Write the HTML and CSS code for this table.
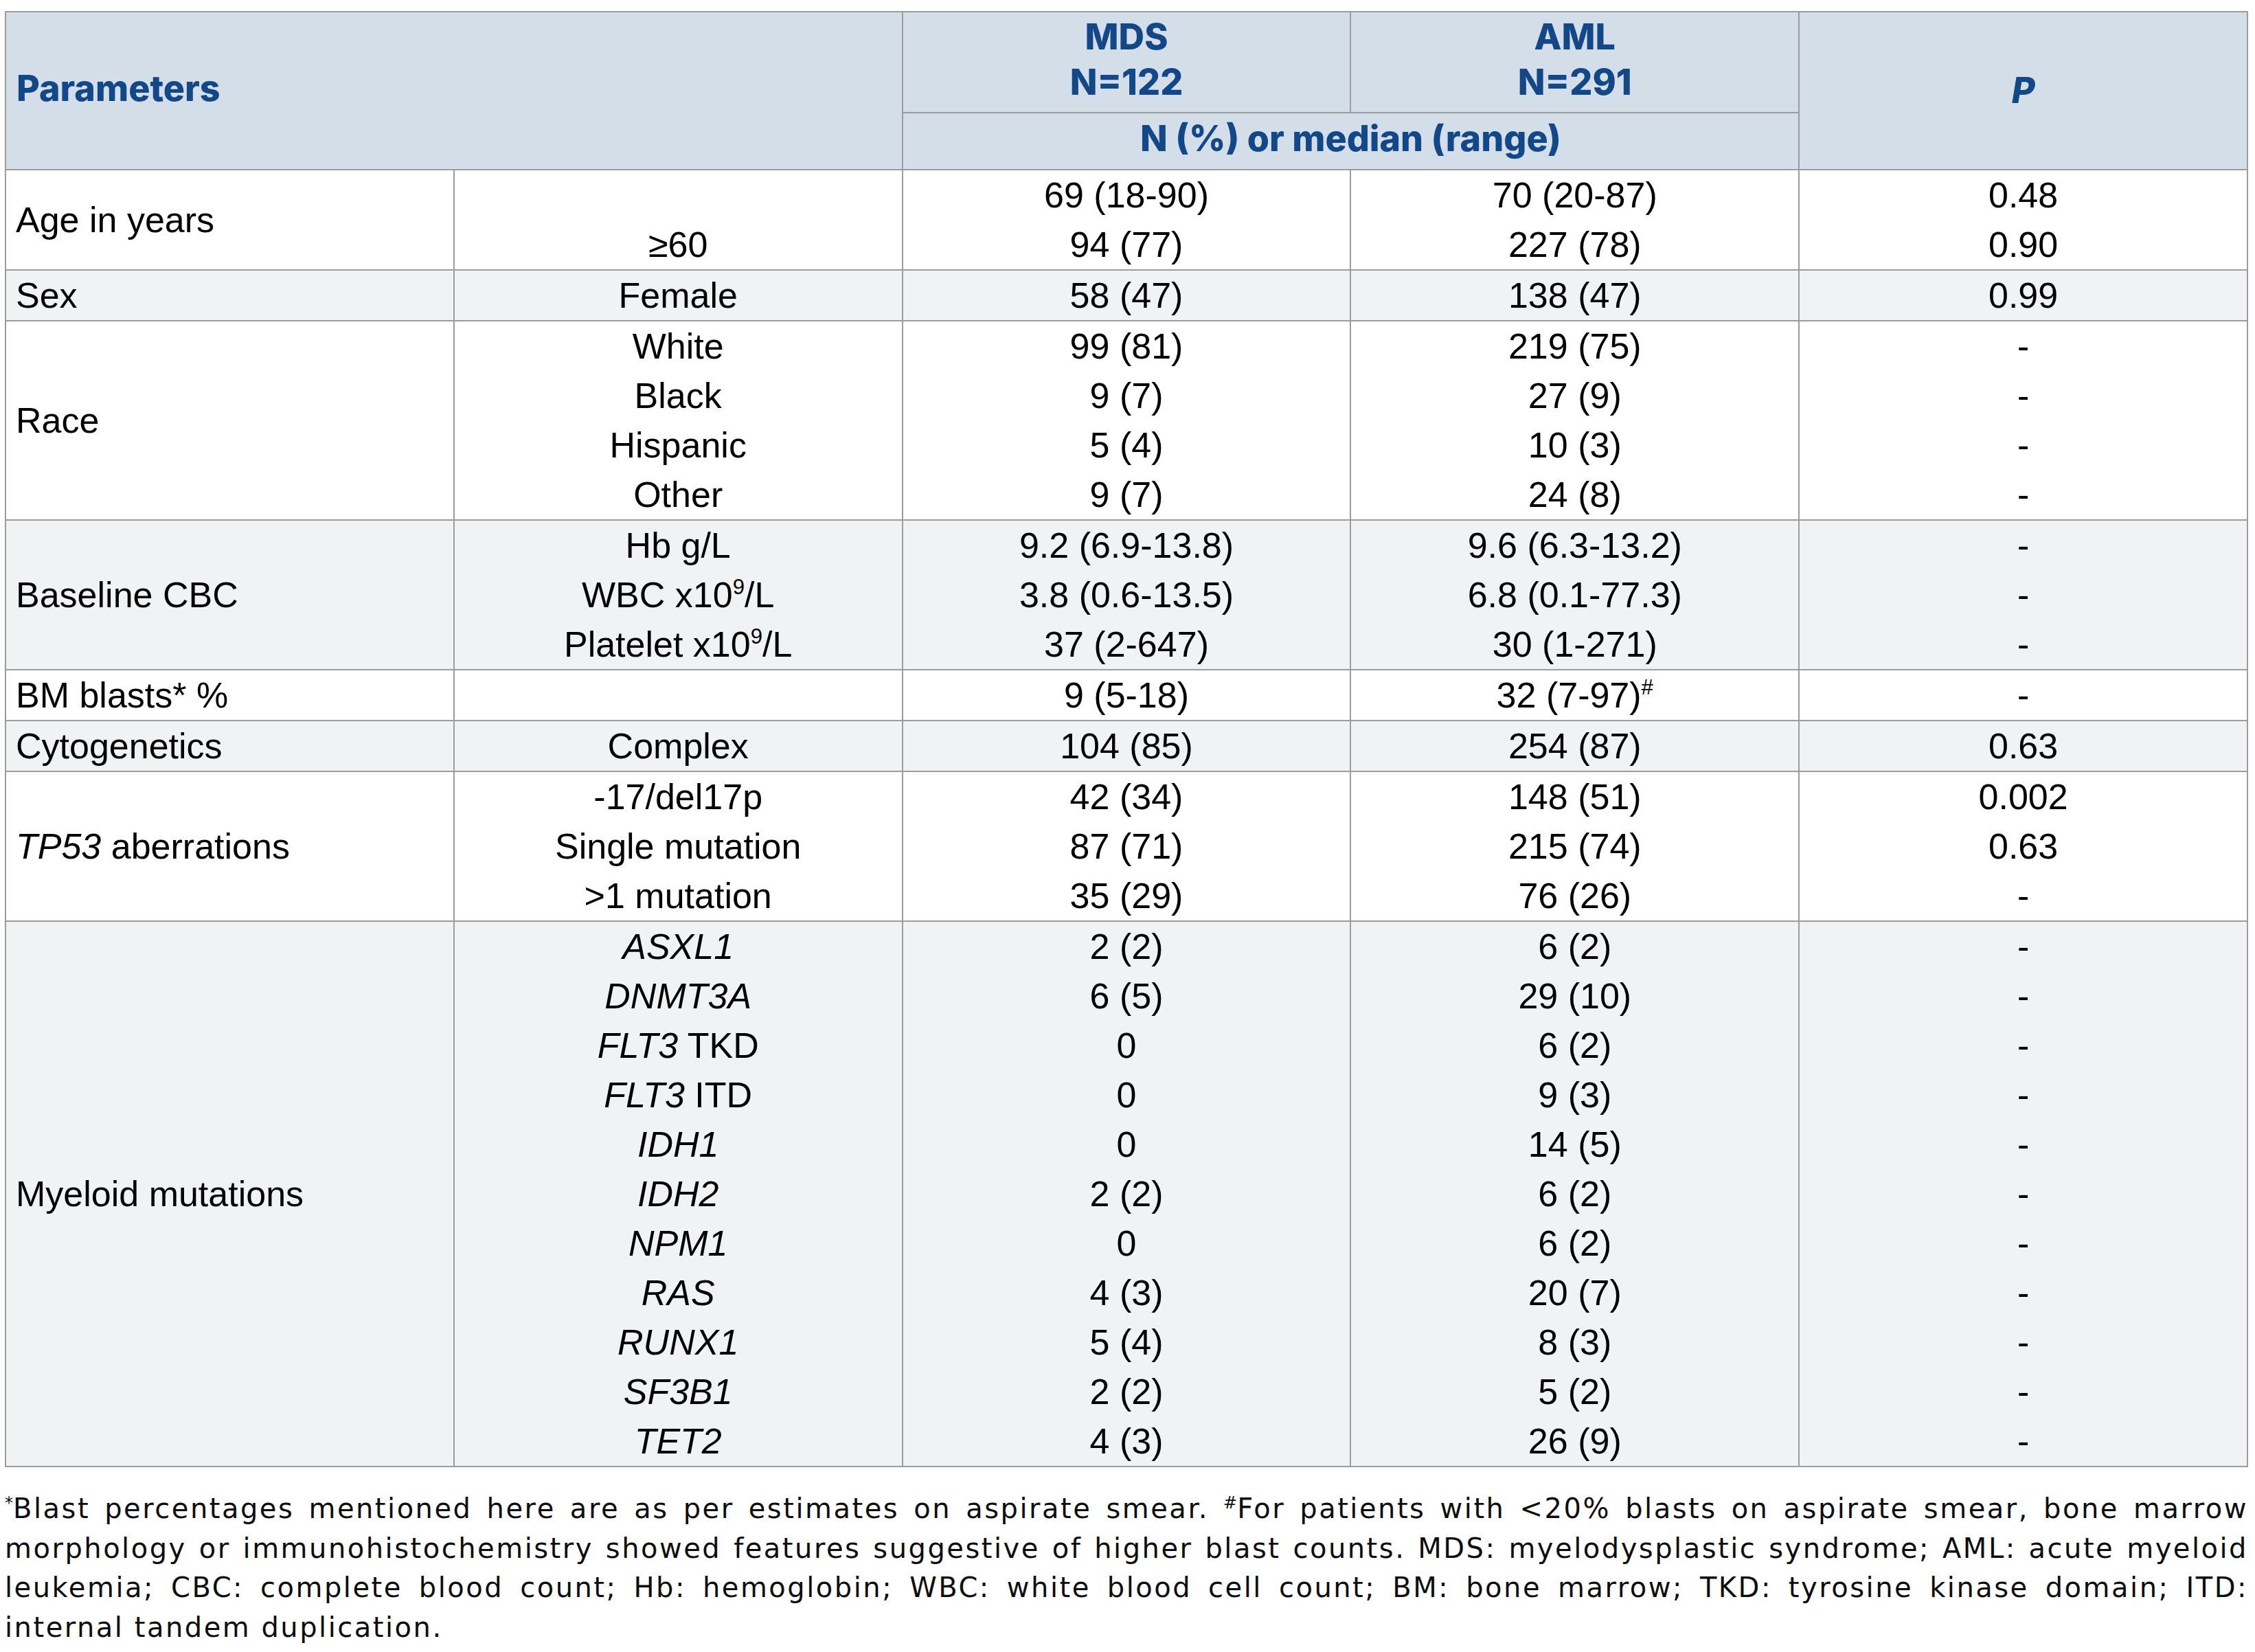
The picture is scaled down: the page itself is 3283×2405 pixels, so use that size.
FILE: index.html
```html
<!DOCTYPE html>
<html lang="en">
<head>
<meta charset="utf-8">
<title>MDS vs AML baseline characteristics</title>
<link rel="stylesheet" href="styles.css">
</head>
<body>
<div class="page">
<table class="tbl">
  <colgroup>
    <col class="c"><col class="c"><col class="c"><col class="c"><col class="c">
  </colgroup>
  <thead>
    <tr class="h1">
      <th class="hl" colspan="2" rowspan="2">Parameters</th>
      <th>MDS<br>N=122</th>
      <th>AML<br>N=291</th>
      <th class="hp" rowspan="2"><i>P</i></th>
    </tr>
    <tr class="h2">
      <th colspan="2">N (%) or median (range)</th>
    </tr>
  </thead>
  <tbody>
    <tr class="w">
      <td class="lab">Age in years</td>
      <td>&nbsp;<br>≥60</td>
      <td>69 (18-90)<br>94 (77)</td>
      <td>70 (20-87)<br>227 (78)</td>
      <td>0.48<br>0.90</td>
    </tr>
    <tr class="g">
      <td class="lab">Sex</td>
      <td>Female</td>
      <td>58 (47)</td>
      <td>138 (47)</td>
      <td>0.99</td>
    </tr>
    <tr class="w">
      <td class="lab">Race</td>
      <td>White<br>Black<br>Hispanic<br>Other</td>
      <td>99 (81)<br>9 (7)<br>5 (4)<br>9 (7)</td>
      <td>219 (75)<br>27 (9)<br>10 (3)<br>24 (8)</td>
      <td>-<br>-<br>-<br>-</td>
    </tr>
    <tr class="g">
      <td class="lab">Baseline CBC</td>
      <td>Hb g/L<br>WBC x10<sup>9</sup>/L<br>Platelet x10<sup>9</sup>/L</td>
      <td>9.2 (6.9-13.8)<br>3.8 (0.6-13.5)<br>37 (2-647)</td>
      <td>9.6 (6.3-13.2)<br>6.8 (0.1-77.3)<br>30 (1-271)</td>
      <td>-<br>-<br>-</td>
    </tr>
    <tr class="w">
      <td class="lab">BM blasts* %</td>
      <td></td>
      <td>9 (5-18)</td>
      <td>32 (7-97)<sup>#</sup></td>
      <td>-</td>
    </tr>
    <tr class="g">
      <td class="lab">Cytogenetics</td>
      <td>Complex</td>
      <td>104 (85)</td>
      <td>254 (87)</td>
      <td>0.63</td>
    </tr>
    <tr class="w">
      <td class="lab"><i>TP53</i> aberrations</td>
      <td>-17/del17p<br>Single mutation<br>&gt;1 mutation</td>
      <td>42 (34)<br>87 (71)<br>35 (29)</td>
      <td>148 (51)<br>215 (74)<br>76 (26)</td>
      <td>0.002<br>0.63<br>-</td>
    </tr>
    <tr class="g">
      <td class="lab">Myeloid mutations</td>
      <td><i>ASXL1</i><br><i>DNMT3A</i><br><i>FLT3</i> TKD<br><i>FLT3</i> ITD<br><i>IDH1</i><br><i>IDH2</i><br><i>NPM1</i><br><i>RAS</i><br><i>RUNX1</i><br><i>SF3B1</i><br><i>TET2</i></td>
      <td>2 (2)<br>6 (5)<br>0<br>0<br>0<br>2 (2)<br>0<br>4 (3)<br>5 (4)<br>2 (2)<br>4 (3)</td>
      <td>6 (2)<br>29 (10)<br>6 (2)<br>9 (3)<br>14 (5)<br>6 (2)<br>6 (2)<br>20 (7)<br>8 (3)<br>5 (2)<br>26 (9)</td>
      <td>-<br>-<br>-<br>-<br>-<br>-<br>-<br>-<br>-<br>-<br>-</td>
    </tr>
  </tbody>
</table>
<div class="notes">
  <span class="ln"><sup>*</sup>Blast percentages mentioned here are as per estimates on aspirate smear. <sup>#</sup>For patients with &lt;20% blasts on aspirate smear, bone marrow</span>
  <span class="ln">morphology or immunohistochemistry showed features suggestive of higher blast counts. MDS: myelodysplastic syndrome; AML: acute myeloid</span>
  <span class="ln">leukemia; CBC: complete blood count; Hb: hemoglobin; WBC: white blood cell count; BM: bone marrow; TKD: tyrosine kinase domain; ITD:</span>
  <span class="ln last">internal tandem duplication.</span>
</div>
</div>
</body>
</html>
```

FILE: styles.css
```css
html, body {
  margin: 0;
  padding: 0;
  background: #ffffff;
}

.page {
  padding: 16px 0 0 7px;
  width: 3266px;
}

.tbl {
  border-collapse: collapse;
  table-layout: fixed;
  width: 3266px;
  font-family: "Liberation Sans", Arial, sans-serif;
  font-size: 52px;
  color: #000000;
}

.tbl .c {
  width: 20%;
}

.tbl th {
  background: #d4dee8;
  color: #134888;
  font-family: Inter, "Liberation Sans", sans-serif;
  font-weight: 800;
  font-size: 52px;
  line-height: 66px;
  border: 2px solid #9c9c9c;
  text-align: center;
  vertical-align: middle;
}

.tbl .h1 th {
  padding: 3px 0 10px;
}

.tbl .h2 th {
  padding: 4px 0 11px;
}

.tbl th.hl {
  text-align: left;
  padding-left: 15px;
}

.tbl th.hp {
  padding-top: 0;
  padding-bottom: 0;
}

.tbl td {
  border: 2px solid #9c9c9c;
  padding: 0;
  line-height: 72px;
  text-align: center;
  vertical-align: middle;
  white-space: nowrap;
}

.tbl td.lab {
  text-align: left;
  padding-left: 14px;
}

.tbl tr.w td {
  background: #ffffff;
}

.tbl tr.g td {
  background: #f1f2f4;
}

.tbl sup {
  font-size: 0.6em;
  line-height: 0;
  vertical-align: 0.6em;
}

.notes {
  margin-top: 32px;
  font-family: "DejaVu Sans", "Liberation Sans", sans-serif;
  font-size: 40px;
  line-height: 57.5px;
  letter-spacing: 2.5px;
  color: #0d0d0d;
}

.notes .ln {
  display: block;
  text-align: justify;
  text-align-last: justify;
}

.notes .ln.last {
  text-align-last: left;
}

.notes sup {
  font-size: 0.6em;
  line-height: 0;
  vertical-align: 0.6em;
  letter-spacing: 0;
}
```
